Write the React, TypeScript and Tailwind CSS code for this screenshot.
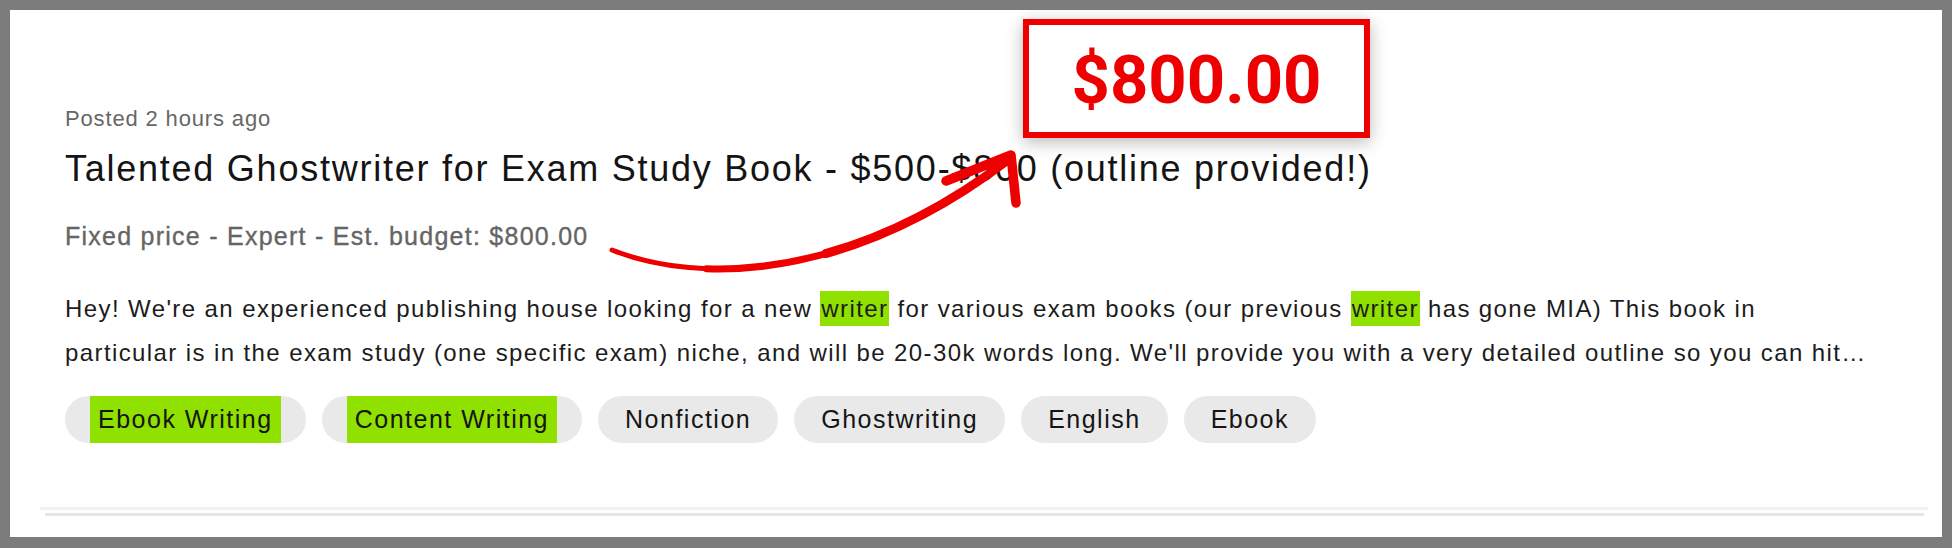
import React from 'react';

const tags = [
  { label: 'Ebook Writing', hit: true },
  { label: 'Content Writing', hit: true },
  { label: 'Nonfiction', hit: false },
  { label: 'Ghostwriting', hit: false },
  { label: 'English', hit: false },
  { label: 'Ebook', hit: false },
];

const Hl: React.FC<{ children: React.ReactNode }> = ({ children }) => (
  <span className="bg-[#90e000] py-[4px] px-[1px]">{children}</span>
);

const JobCard: React.FC = () => {
  return (
    <div className="flex flex-col pt-[96px] pl-[55px] font-['Liberation_Sans',Arial,sans-serif]">
      <div className="text-[22px] leading-[26px] tracking-[0.85px] text-[#676767]">Posted 2 hours ago</div>
      <h2 className="mt-[15px] text-[36px] leading-[44px] tracking-[1.75px] text-[#141414] whitespace-nowrap">
        Talented Ghostwriter for Exam Study Book - $500-$800 (outline provided!)
      </h2>
      <div className="mt-[30px] text-[25px] leading-[30px] tracking-[1.25px] text-[#656565] [-webkit-text-stroke:0.35px_#656565]">
        Fixed price - Expert - Est. budget: $800.00
      </div>
      <div className="mt-[36px] text-[24px] leading-[44px] tracking-[1.4px] text-[#1c1c1c] whitespace-nowrap">
        <div>
          Hey! We're an experienced publishing house looking for a new <Hl>writer</Hl> for various exam books (our
          previous <Hl>writer</Hl> has gone MIA) This book in
        </div>
        <div>
          particular is in the exam study (one specific exam) niche, and will be 20-30k words long. We'll provide you
          with a very detailed outline so you can hit…
        </div>
      </div>
      <div className="mt-[21px] flex gap-4">
        {tags.map((t) => (
          <div
            key={t.label}
            className={
              t.hit
                ? 'h-[47px] px-[25px] rounded-full bg-[#e9e9e9] flex items-stretch text-[25px] tracking-[1.5px] text-[#151515]'
                : 'h-[47px] px-[27px] rounded-full bg-[#e9e9e9] flex items-stretch text-[25px] tracking-[1.5px] text-[#151515]'
            }
          >
            <span className={t.hit ? 'flex items-center bg-[#90e000] px-2' : 'flex items-center'}>{t.label}</span>
          </div>
        ))}
      </div>
      <div className="mt-[64px] -ml-[25px] mr-[14px] h-[3px] bg-[#f1f1f1]" />
      <div className="mt-[3px] -ml-[20px] mr-[18px] h-[3px] bg-[#e6e6e6]" />
    </div>
  );
};

const App: React.FC = () => {
  return (
    <div className="relative w-[1952px] h-[548px] bg-[#7c7c7c] pt-[10px] pl-[10px] pr-[10px] pb-[11px] overflow-hidden">
      <div className="h-full bg-white overflow-hidden">
        <JobCard />
      </div>

      {/* hand-drawn arrow, thin at the tail and thicker toward the head */}
      <svg className="absolute inset-0 pointer-events-none" width="1952" height="548" viewBox="0 0 1952 548">
        <g fill="none" stroke="#ee0000" strokeLinecap="round" strokeLinejoin="round">
          <path d="M612 250 C 700 285, 850 280, 1008 160" strokeWidth="5" />
          <path d="M706.5 268.7 C790.7 271.65, 897.4 244, 1008 160" strokeWidth="7" />
          <path d="M825.7 253.6 C882.9 237.6, 944.8 208, 1008 160" strokeWidth="9" />
          <path d="M946 181 L1011 155 L1016 203" strokeWidth="9.5" />
        </g>
      </svg>

      <div className="absolute left-[1023px] top-[19px] w-[347px] h-[119px] border-[6px] border-[#ee0000] bg-white shadow-[0_4px_16px_rgba(0,0,0,0.28)] flex items-center justify-center">
        <span className="mt-[4px] font-['Roboto',sans-serif] font-bold text-[67px] leading-none text-[#ee0000]">
          $800.00
        </span>
      </div>
    </div>
  );
};

export default App;
